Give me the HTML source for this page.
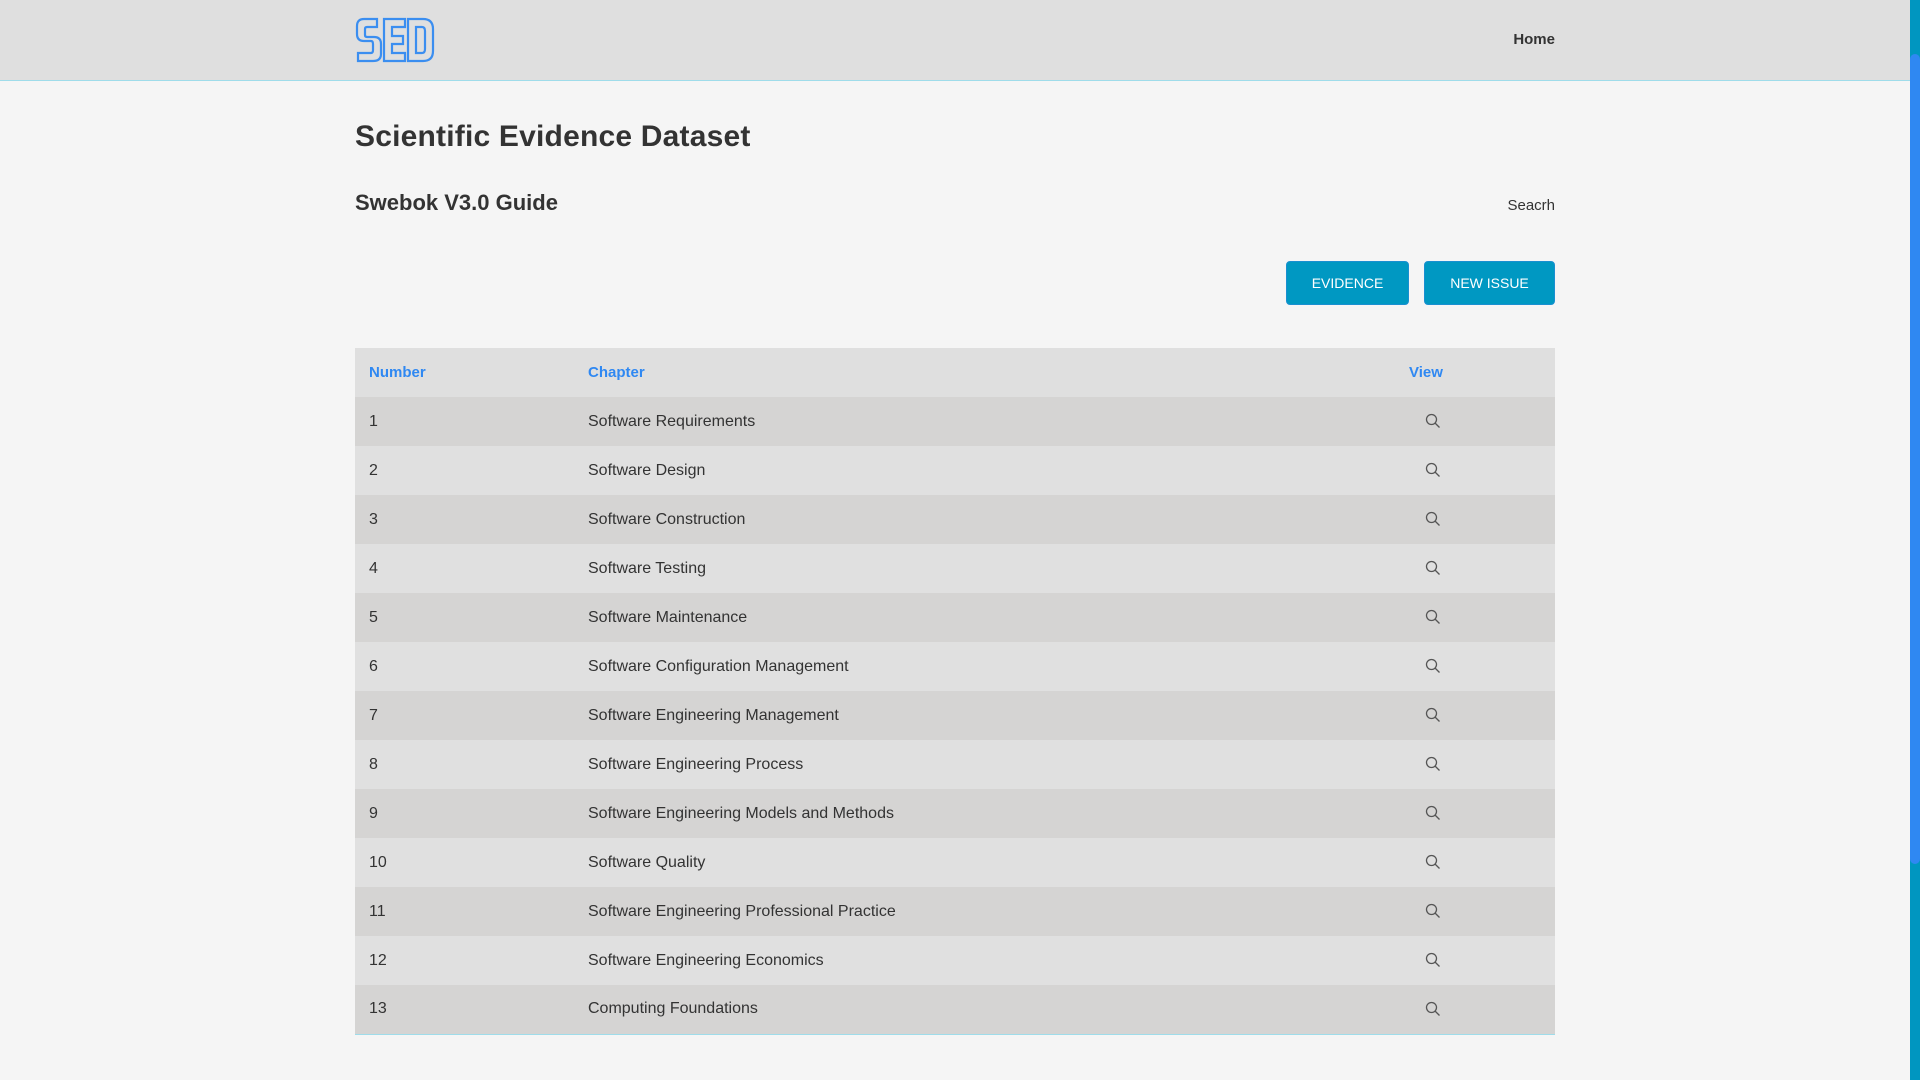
<!DOCTYPE html>
<html><head><meta charset="utf-8"><style>
*{margin:0;padding:0;box-sizing:border-box}
body{width:1920px;height:1080px;background:#f5f5f5;font-family:"Liberation Sans",sans-serif;color:#333;position:relative;overflow:hidden}
.hdr{position:absolute;left:0;top:0;width:1910px;height:81px;background:#dfdfdf;border-bottom:1px solid #9fdcea}
.logo{position:absolute;left:355px;top:17px}
.home{position:absolute;right:355px;top:31px;font-size:15px;font-weight:bold;color:#333}
h1{position:absolute;left:355px;top:120px;font-size:30px;font-weight:bold;color:#333;letter-spacing:0.2px}
h2{position:absolute;left:355px;top:190px;font-size:22px;font-weight:bold;color:#333}
.search{position:absolute;right:365px;top:197px;font-size:15px;color:#333}
.btn{position:absolute;top:261px;height:44px;background:#0098c2;color:#fff;border-radius:4px;font-size:14px;display:flex;align-items:center;justify-content:center;border:1px solid #1a8fd0}
table{position:absolute;left:355px;top:348px;width:1200px;border-collapse:collapse;font-size:16px;border-bottom:1px solid #9fdcea;table-layout:fixed}
td,th{height:49px;text-align:left;padding:0}
th{color:#2f88f2;font-weight:bold;background:#dfdfdf;font-size:15px}
tr:nth-child(even) td{background:#d5d4d3}
tr:nth-child(odd) td{background:#e0e0e0}
.c1{padding-left:14px;width:233px}
.c2{width:821px}
.c3{width:146px}
</style></head><body>
<div class="hdr">
<svg class="logo" width="80" height="46" viewBox="0 0 80 46" fill="none" stroke="#3b8ef0" stroke-width="2.2">
<path d="M22 2H9Q2 2 2 9V17Q2 24 9 24H16Q18 24 18 27V33Q18 36 16 36H3V44H18Q26 44 26 37V27Q26 20 19 20H12Q10 20 10 18V12Q10 10 12 10H22Z"/>
<path d="M29 2H50V10H37V19H48V27H37V36H50V44H29Z"/>
<path d="M53 2H68Q78 2 78 12V34Q78 44 68 44H53Z M61 10V36H67Q70 36 70 32V14Q70 10 67 10Z"/>
</svg>
<div class="home">Home</div>
</div>
<h1>Scientific Evidence Dataset</h1>
<h2>Swebok V3.0 Guide</h2>
<div class="search">Seacrh</div>
<div class="btn" style="left:1286px;width:123px">EVIDENCE</div>
<div class="btn" style="left:1424px;width:131px">NEW ISSUE</div>
<div style="position:absolute;left:1910px;top:0;width:10px;height:1080px;background:#0096c0"></div>
<div style="position:absolute;left:1910px;top:54px;width:10px;height:810px;background:#2f88f2;border-radius:5px"></div>
<table>
<tr><th class="c1">Number</th><th class="c2">Chapter</th><th class="c3">View</th></tr>
<tr><td class="c1">1</td><td>Software Requirements</td><td><svg width="16" height="16" viewBox="0 0 16 16" style="margin-left:16px;margin-top:4px" fill="none" stroke="#555" stroke-width="1.3"><circle cx="6.5" cy="6.5" r="5"/><path d="M10 10L14.5 14.5"/></svg></td></tr>
<tr><td class="c1">2</td><td>Software Design</td><td><svg width="16" height="16" viewBox="0 0 16 16" style="margin-left:16px;margin-top:4px" fill="none" stroke="#555" stroke-width="1.3"><circle cx="6.5" cy="6.5" r="5"/><path d="M10 10L14.5 14.5"/></svg></td></tr>
<tr><td class="c1">3</td><td>Software Construction</td><td><svg width="16" height="16" viewBox="0 0 16 16" style="margin-left:16px;margin-top:4px" fill="none" stroke="#555" stroke-width="1.3"><circle cx="6.5" cy="6.5" r="5"/><path d="M10 10L14.5 14.5"/></svg></td></tr>
<tr><td class="c1">4</td><td>Software Testing</td><td><svg width="16" height="16" viewBox="0 0 16 16" style="margin-left:16px;margin-top:4px" fill="none" stroke="#555" stroke-width="1.3"><circle cx="6.5" cy="6.5" r="5"/><path d="M10 10L14.5 14.5"/></svg></td></tr>
<tr><td class="c1">5</td><td>Software Maintenance</td><td><svg width="16" height="16" viewBox="0 0 16 16" style="margin-left:16px;margin-top:4px" fill="none" stroke="#555" stroke-width="1.3"><circle cx="6.5" cy="6.5" r="5"/><path d="M10 10L14.5 14.5"/></svg></td></tr>
<tr><td class="c1">6</td><td>Software Configuration Management</td><td><svg width="16" height="16" viewBox="0 0 16 16" style="margin-left:16px;margin-top:4px" fill="none" stroke="#555" stroke-width="1.3"><circle cx="6.5" cy="6.5" r="5"/><path d="M10 10L14.5 14.5"/></svg></td></tr>
<tr><td class="c1">7</td><td>Software Engineering Management</td><td><svg width="16" height="16" viewBox="0 0 16 16" style="margin-left:16px;margin-top:4px" fill="none" stroke="#555" stroke-width="1.3"><circle cx="6.5" cy="6.5" r="5"/><path d="M10 10L14.5 14.5"/></svg></td></tr>
<tr><td class="c1">8</td><td>Software Engineering Process</td><td><svg width="16" height="16" viewBox="0 0 16 16" style="margin-left:16px;margin-top:4px" fill="none" stroke="#555" stroke-width="1.3"><circle cx="6.5" cy="6.5" r="5"/><path d="M10 10L14.5 14.5"/></svg></td></tr>
<tr><td class="c1">9</td><td>Software Engineering Models and Methods</td><td><svg width="16" height="16" viewBox="0 0 16 16" style="margin-left:16px;margin-top:4px" fill="none" stroke="#555" stroke-width="1.3"><circle cx="6.5" cy="6.5" r="5"/><path d="M10 10L14.5 14.5"/></svg></td></tr>
<tr><td class="c1">10</td><td>Software Quality</td><td><svg width="16" height="16" viewBox="0 0 16 16" style="margin-left:16px;margin-top:4px" fill="none" stroke="#555" stroke-width="1.3"><circle cx="6.5" cy="6.5" r="5"/><path d="M10 10L14.5 14.5"/></svg></td></tr>
<tr><td class="c1">11</td><td>Software Engineering Professional Practice</td><td><svg width="16" height="16" viewBox="0 0 16 16" style="margin-left:16px;margin-top:4px" fill="none" stroke="#555" stroke-width="1.3"><circle cx="6.5" cy="6.5" r="5"/><path d="M10 10L14.5 14.5"/></svg></td></tr>
<tr><td class="c1">12</td><td>Software Engineering Economics</td><td><svg width="16" height="16" viewBox="0 0 16 16" style="margin-left:16px;margin-top:4px" fill="none" stroke="#555" stroke-width="1.3"><circle cx="6.5" cy="6.5" r="5"/><path d="M10 10L14.5 14.5"/></svg></td></tr>
<tr><td class="c1">13</td><td>Computing Foundations</td><td><svg width="16" height="16" viewBox="0 0 16 16" style="margin-left:16px;margin-top:4px" fill="none" stroke="#555" stroke-width="1.3"><circle cx="6.5" cy="6.5" r="5"/><path d="M10 10L14.5 14.5"/></svg></td></tr>
</table>
</body></html>
